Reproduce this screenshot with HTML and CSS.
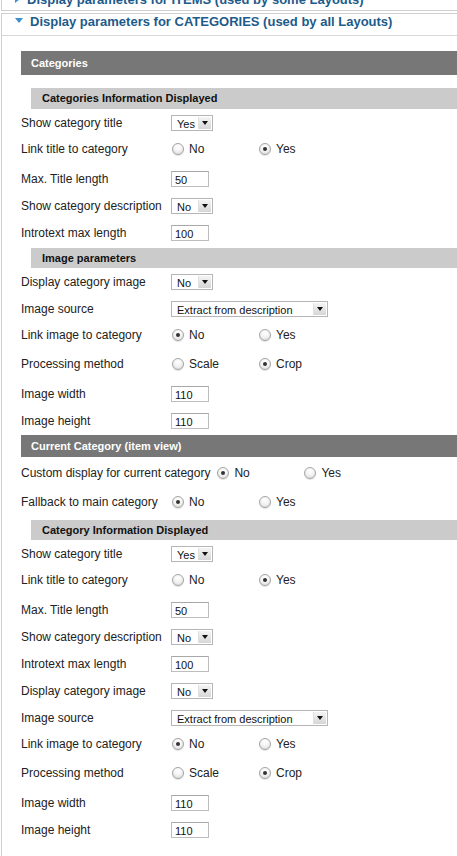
FILE: index.html
```html
<!DOCTYPE html>
<html>
<head>
    <meta charset="utf-8">
    <title>Display parameters</title>
    <link rel="stylesheet" href="styles.css">
</head>
<body>
    <!--collapsed panel, only its bottom edge is visible-->
    <div class="panel panel-items">
        <h3 class="panel-title"><span class="arrow arrow-right"></span>Display parameters for ITEMS (used by some Layouts)</h3>
    </div>

    <div class="panel">
        <h3 class="panel-title"><span class="arrow arrow-down"></span>Display parameters for CATEGORIES (used by all Layouts)</h3>
        <div class="panel-body">

            <div class="bar-dark">Categories</div>
            <div class="bar-light first">Categories Information Displayed</div>

            <div class="row"><span class="label">Show category title</span><span class="select w-small">Yes<span class="drop"></span></span></div>
            <div class="row radio-row"><span class="label">Link title to category</span><span class="option"><span class="radio"></span>No</span><span class="option"><span class="radio checked"></span>Yes</span></div>
            <div class="row"><span class="label">Max. Title length</span><span class="textbox">50</span></div>
            <div class="row"><span class="label">Show category description</span><span class="select w-small">No<span class="drop"></span></span></div>
            <div class="row"><span class="label">Introtext max length</span><span class="textbox">100</span></div>

            <div class="bar-light">Image parameters</div>

            <div class="row"><span class="label">Display category image</span><span class="select w-small">No<span class="drop"></span></span></div>
            <div class="row"><span class="label">Image source</span><span class="select w-large">Extract from description<span class="drop"></span></span></div>
            <div class="row radio-row"><span class="label">Link image to category</span><span class="option"><span class="radio checked"></span>No</span><span class="option"><span class="radio"></span>Yes</span></div>
            <div class="row radio-row"><span class="label">Processing method</span><span class="option"><span class="radio"></span>Scale</span><span class="option"><span class="radio checked"></span>Crop</span></div>
            <div class="row"><span class="label">Image width</span><span class="textbox">110</span></div>
            <div class="row"><span class="label">Image height</span><span class="textbox">110</span></div>

            <div class="bar-dark small">Current Category (item view)</div>

            <div class="row radio-row"><span class="label">Custom display for current category</span><span class="option"><span class="radio checked"></span>No</span><span class="option"><span class="radio"></span>Yes</span></div>
            <div class="row radio-row"><span class="label">Fallback to main category</span><span class="option"><span class="radio checked"></span>No</span><span class="option"><span class="radio"></span>Yes</span></div>

            <div class="bar-light">Category Information Displayed</div>

            <div class="row"><span class="label">Show category title</span><span class="select w-small">Yes<span class="drop"></span></span></div>
            <div class="row radio-row"><span class="label">Link title to category</span><span class="option"><span class="radio"></span>No</span><span class="option"><span class="radio checked"></span>Yes</span></div>
            <div class="row"><span class="label">Max. Title length</span><span class="textbox">50</span></div>
            <div class="row"><span class="label">Show category description</span><span class="select w-small">No<span class="drop"></span></span></div>
            <div class="row"><span class="label">Introtext max length</span><span class="textbox">100</span></div>
            <div class="row"><span class="label">Display category image</span><span class="select w-small">No<span class="drop"></span></span></div>
            <div class="row"><span class="label">Image source</span><span class="select w-large">Extract from description<span class="drop"></span></span></div>
            <div class="row radio-row"><span class="label">Link image to category</span><span class="option"><span class="radio checked"></span>No</span><span class="option"><span class="radio"></span>Yes</span></div>
            <div class="row radio-row"><span class="label">Processing method</span><span class="option"><span class="radio"></span>Scale</span><span class="option"><span class="radio checked"></span>Crop</span></div>
            <div class="row"><span class="label">Image width</span><span class="textbox">110</span></div>
            <div class="row"><span class="label">Image height</span><span class="textbox">110</span></div>

        </div>
    </div>
</body>
</html>
```

FILE: styles.css
```css
body {
	margin: 0;
	padding: 0 0 0 1px;
	background: #fff;
	font: normal 12px "Liberation Sans", Arial, Helvetica, sans-serif;
	color: #222;
	overflow: hidden;
}

/* panels */
.panel {
	border: 1px solid #cfcfcf;
	border-right: none;
	margin-bottom: 2px;
}
.panel-items {
	margin-top: -12px;
}
.panel-title {
	margin: 0;
	height: 21px;
	line-height: 29px;
	padding-left: 13px;
	overflow: hidden;
	font: bold 13px "Liberation Sans", Arial, Helvetica, sans-serif;
	color: #1d5b8a;
	white-space: nowrap;
	border-bottom: 1px solid #d8d8d8;
}
.panel-items .panel-title {
	border-bottom: none;
	line-height: 21px;
}
.arrow {
	display: inline-block;
	width: 0;
	height: 0;
	margin-right: 7px;
	vertical-align: middle;
	position: relative;
	top: -2px;
}
.arrow-down {
	border-left: 4px solid transparent;
	border-right: 4px solid transparent;
	border-top: 5px solid #3a8fd0;
}
.arrow-right {
	border-top: 4px solid transparent;
	border-bottom: 4px solid transparent;
	border-left: 5px solid #3a8fd0;
}
.panel-body {
	padding: 15px 0 20px 19px;
}

/* section bars */
.bar-dark {
	height: 24px;
	line-height: 24px;
	padding-left: 10px;
	background: #777;
	color: #fff;
	font-weight: bold;
	font-size: 11px;
}
.bar-dark.small {
	height: 22px;
	line-height: 22px;
	margin: 1px 0 3px;
}
.bar-light {
	height: 20px;
	line-height: 20px;
	margin: 2px 0 0 10px;
	padding-left: 11px;
	background: #cbcbcb;
	color: #111;
	font-weight: bold;
	font-size: 11px;
}
.bar-light.first {
	height: 21px;
	line-height: 21px;
	margin-top: 13px;
}

/* form rows */
.row {
	display: flex;
	align-items: center;
	height: 27px;
	white-space: nowrap;
}
.radio-row {
	height: 29px;
	padding-bottom: 4px;
	box-sizing: border-box;
}
.label {
	display: inline-block;
	min-width: 150px;
	padding-right: 6px;
	box-sizing: border-box;
}

.select {
	display: inline-block;
	position: relative;
	height: 16px;
	line-height: 16px;
	box-sizing: border-box;
	padding-left: 5px;
	border: 1px solid #b5b5b5;
	background: #fff;
	font-size: 11px;
	color: #111;
}
.w-small {
	width: 42px;
}
.w-large {
	width: 157px;
}
.drop {
	position: absolute;
	top: 1px;
	right: 1px;
	width: 12px;
	height: 12px;
	background: linear-gradient(#f4f4f4, #d6d6d6);
	border-left: 1px solid #e0e0e0;
}
.drop:after {
	content: "";
	position: absolute;
	left: 3px;
	top: 4px;
	border-left: 3px solid transparent;
	border-right: 3px solid transparent;
	border-top: 4px solid #111;
}

.textbox {
	display: inline-block;
	width: 38px;
	height: 16px;
	line-height: 16px;
	box-sizing: border-box;
	padding-left: 3px;
	border: 1px solid #bdbdbd;
	border-top-color: #a8a8a8;
	font-size: 11px;
	color: #111;
}

.option {
	display: inline-flex;
	align-items: center;
	width: 87px;
	font-size: 12px;
}
.radio {
	display: inline-block;
	position: relative;
	width: 12px;
	height: 12px;
	margin: 0 5px 0 1px;
	box-sizing: border-box;
	border: 1px solid #a4a4a4;
	border-radius: 50%;
	background: radial-gradient(circle at 50% 30%, #ffffff 0%, #f2f2f2 50%, #d4d4d4 100%);
	box-shadow: 0 1px 1px rgba(0,0,0,0.12);
}
.radio.checked:after {
	content: "";
	position: absolute;
	left: 3px;
	top: 3px;
	width: 4px;
	height: 4px;
	border-radius: 50%;
	background: #333;
}
```
